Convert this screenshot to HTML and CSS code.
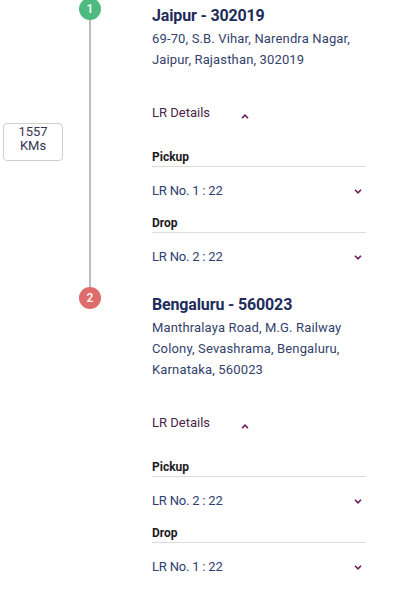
FILE: index.html
```html
<!DOCTYPE html>
<html>
<head>
<meta charset="utf-8">
<link rel="stylesheet" href="styles.css">
</head>
<body>
<div class="route">
  <div class="stop">
    <div class="side"><div class="km">1557<br>KMs</div></div>
    <div class="rail"><div class="dot green">1</div><div class="line"></div></div>
    <div class="content">
      <div class="title">Jaipur - 302019</div>
      <div class="address">69-70, S.B. Vihar, Narendra Nagar,<br>Jaipur, Rajasthan, 302019</div>
      <div class="toggle"><span>LR Details</span>
        <svg class="chev-up" width="8" height="5" viewBox="0 0 8 5"><path d="M1 4.2 L4 1.2 L7 4.2" fill="none" stroke="#6d1b5e" stroke-width="1.6"/></svg>
      </div>
      <div class="label first">Pickup</div>
      <div class="row"><span>LR No. 1 : 22</span>
        <svg class="chev-down" width="8" height="5" viewBox="0 0 8 5"><path d="M1 0.8 L4 3.8 L7 0.8" fill="none" stroke="#6d1b5e" stroke-width="1.6"/></svg>
      </div>
      <div class="label">Drop</div>
      <div class="row"><span>LR No. 2 : 22</span>
        <svg class="chev-down" width="8" height="5" viewBox="0 0 8 5"><path d="M1 0.8 L4 3.8 L7 0.8" fill="none" stroke="#6d1b5e" stroke-width="1.6"/></svg>
      </div>
    </div>
  </div>
  <div class="stop">
    <div class="side"></div>
    <div class="rail"><div class="dot red">2</div></div>
    <div class="content">
      <div class="title">Bengaluru - 560023</div>
      <div class="address">Manthralaya Road, M.G. Railway<br>Colony, Sevashrama, Bengaluru,<br>Karnataka, 560023</div>
      <div class="toggle"><span>LR Details</span>
        <svg class="chev-up" width="8" height="5" viewBox="0 0 8 5"><path d="M1 4.2 L4 1.2 L7 4.2" fill="none" stroke="#6d1b5e" stroke-width="1.6"/></svg>
      </div>
      <div class="label first">Pickup</div>
      <div class="row"><span>LR No. 2 : 22</span>
        <svg class="chev-down" width="8" height="5" viewBox="0 0 8 5"><path d="M1 0.8 L4 3.8 L7 0.8" fill="none" stroke="#6d1b5e" stroke-width="1.6"/></svg>
      </div>
      <div class="label">Drop</div>
      <div class="row"><span>LR No. 1 : 22</span>
        <svg class="chev-down" width="8" height="5" viewBox="0 0 8 5"><path d="M1 0.8 L4 3.8 L7 0.8" fill="none" stroke="#6d1b5e" stroke-width="1.6"/></svg>
      </div>
    </div>
  </div>
</div>
</body>
</html>
```
FILE: styles.css
```css
html, body {
  margin: 0;
  padding: 0;
  background: #ffffff;
}
body {
  font-family: Roboto, "Liberation Sans", sans-serif;
  overflow: hidden;
}
.route {
  display: flex;
  flex-direction: column;
}
.stop {
  display: grid;
  grid-template-columns: 79px 22px 265px;
  align-items: stretch;
}
.side {
  padding-top: 123px;
}
.km {
  margin-left: 3px;
  width: 58px;
  border: 1px solid #cfcfcf;
  border-radius: 4px;
  text-align: center;
  font-size: 13px;
  line-height: 14px;
  padding: 1px 0 7px;
  color: #3a3550;
}
.rail {
  display: flex;
  flex-direction: column;
  align-items: center;
}
.dot {
  width: 22px;
  height: 22px;
  margin-top: -2px;
  border-radius: 50%;
  color: #ffffff;
  font-size: 12px;
  font-weight: 500;
  line-height: 22px;
  text-align: center;
  flex: none;
}
.green { background: #4dbb7f; }
.red { background: #e06b6b; }
.line {
  flex: 1;
  width: 2px;
  background: #bdbdbd;
}
.content {
  padding: 5px 0 22px 51px;
}
.title {
  font-size: 16px;
  font-weight: 700;
  line-height: 21px;
  letter-spacing: -0.15px;
  color: #1d2c5b;
}
.address {
  margin-top: 2px;
  font-size: 13px;
  line-height: 21px;
  letter-spacing: 0.15px;
  color: #34426c;
}
.toggle {
  margin-top: 32px;
  width: 97px;
  height: 21px;
  display: flex;
  justify-content: space-between;
  font-size: 13px;
  line-height: 21px;
  color: #4a2546;
}
.chev-up {
  margin-top: 12px;
}
.label {
  margin-top: 14px;
  width: 214px;
  font-size: 12px;
  font-weight: 700;
  line-height: 16px;
  padding-bottom: 1px;
  border-bottom: 1px solid #dcdcdc;
  color: #1c1c1c;
}
.label.first {
  margin-top: 26px;
}
.row {
  margin-top: 13px;
  width: 214px;
  height: 21px;
  display: flex;
  justify-content: space-between;
  font-size: 13px;
  line-height: 21px;
  color: #2f3e70;
}
.row span {
  letter-spacing: -0.2px;
}
.chev-down {
  margin-top: 9px;
  margin-right: 4px;
}
```
